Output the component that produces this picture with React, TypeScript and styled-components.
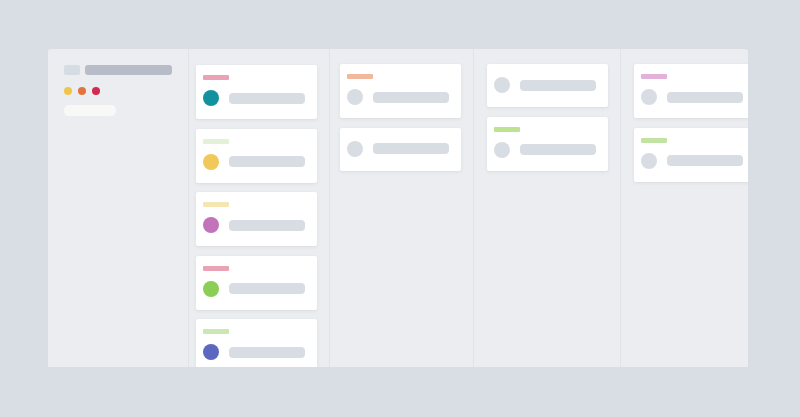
import React from 'react';
import styled, { createGlobalStyle } from 'styled-components';

type CardData = { label?: string; dot?: string };
type ColumnData = { id: string; width: number; inset: number; top: number; cards: CardData[] };

const COLUMNS: ColumnData[] = [
	{
		id: 'todo',
		width: 141,
		inset: 7,
		top: 16,
		cards: [
			{ label: '#e9a3b4', dot: '#12929f' },
			{ label: '#e3f2d6', dot: '#f0c95a' },
			{ label: '#f5e6b4', dot: '#c273b9' },
			{ label: '#e9a3b4', dot: '#8acd57' },
			{ label: '#cbe8b2', dot: '#5c67c0' },
		],
	},
	{
		id: 'doing',
		width: 144,
		inset: 10,
		top: 15,
		cards: [{ label: '#f2b89b' }, {}],
	},
	{
		id: 'review',
		width: 147,
		inset: 13,
		top: 15,
		cards: [{}, { label: '#bde392' }],
	},
	{
		id: 'done',
		width: 128,
		inset: 13,
		top: 15,
		cards: [{ label: '#e2b2da' }, { label: '#c2e3a3' }],
	},
];

const SIDEBAR_DOTS = ['#f1c54c', '#e2733f', '#d52a4f'];

const GlobalStyle = createGlobalStyle`
	html, body {
		margin: 0;
		padding: 0;
		background: #d9dee4;
		font-family: 'Inter', 'Liberation Sans', sans-serif;
	}
`;

const App = () => (
	<>
		<GlobalStyle />
		<Page>
			<Board>
				<Sidebar>
					<TitleRow>
						<TitleIcon />
						<TitleBar />
					</TitleRow>
					<DotRow>
						{SIDEBAR_DOTS.map((color) => (
							<Dot key={color} $color={color} />
						))}
					</DotRow>
					<Pill />
				</Sidebar>
				{COLUMNS.map((col) => (
					<Column key={col.id} $width={col.width} $inset={col.inset} $top={col.top}>
						{col.cards.map((card, i) => (
							<Card key={i} $labelled={!!card.label}>
								{card.label && <Label $color={card.label} />}
								<CardRow>
									<Avatar $color={card.dot} />
									<LineBar />
								</CardRow>
							</Card>
						))}
					</Column>
				))}
			</Board>
		</Page>
	</>
);

const Page = styled.div`
	padding: 49px 52px 0 48px;
	height: 417px;
	box-sizing: border-box;
`;

const Board = styled.div`
	display: flex;
	width: 700px;
	height: 318px;
	background: #ebedf0;
	border-radius: 3px 3px 0 0;
	overflow: hidden;
`;

const Sidebar = styled.div`
	flex: 0 0 140px;
	box-sizing: border-box;
	padding: 16px;
	border-right: 1px solid #e0e3e7;
	display: flex;
	flex-direction: column;
	align-items: flex-start;
`;

const TitleRow = styled.div`
	display: flex;
	gap: 5px;
`;

const TitleIcon = styled.div`
	width: 16px;
	height: 10px;
	border-radius: 2px;
	background: #d6dce3;
`;

const TitleBar = styled.div`
	width: 87px;
	height: 10px;
	border-radius: 3px;
	background: #b8bcc9;
`;

const DotRow = styled.div`
	display: flex;
	gap: 6px;
	margin-top: 12px;
`;

const Dot = styled.div<{ $color: string }>`
	width: 8px;
	height: 8px;
	border-radius: 50%;
	background: ${(p) => p.$color};
`;

const Pill = styled.div`
	margin-top: 10px;
	width: 52px;
	height: 11px;
	border-radius: 5px;
	background: #f8f9f7;
`;

const Column = styled.div<{ $width: number; $inset: number; $top: number }>`
	flex: 0 0 ${(p) => p.$width}px;
	box-sizing: border-box;
	padding: ${(p) => p.$top}px 0 0 ${(p) => p.$inset}px;
	border-right: 1px solid #e0e3e7;
	display: flex;
	flex-direction: column;
	gap: 9.5px;
	&:last-child {
		border-right: none;
	}
`;

const Card = styled.div<{ $labelled: boolean }>`
	flex: 0 0 auto;
	width: 121px;
	box-sizing: border-box;
	padding: ${(p) => (p.$labelled ? '10px 7px 13px' : '13px 7px 14px')};
	background: #ffffff;
	border-radius: 2px;
	box-shadow: 0 1px 3px rgba(160, 170, 185, 0.25);
	display: flex;
	flex-direction: column;
	gap: 10px;
`;

const Label = styled.div<{ $color: string }>`
	width: 26px;
	height: 5px;
	border-radius: 1px;
	background: ${(p) => p.$color};
`;

const CardRow = styled.div`
	display: flex;
	align-items: center;
	gap: 10px;
`;

const Avatar = styled.div<{ $color?: string }>`
	width: 16px;
	height: 16px;
	border-radius: 50%;
	background: ${(p) => p.$color ?? '#d8dde3'};
`;

const LineBar = styled.div`
	width: 76px;
	height: 11px;
	border-radius: 4px;
	background: #d8dde3;
`;

export default App;
